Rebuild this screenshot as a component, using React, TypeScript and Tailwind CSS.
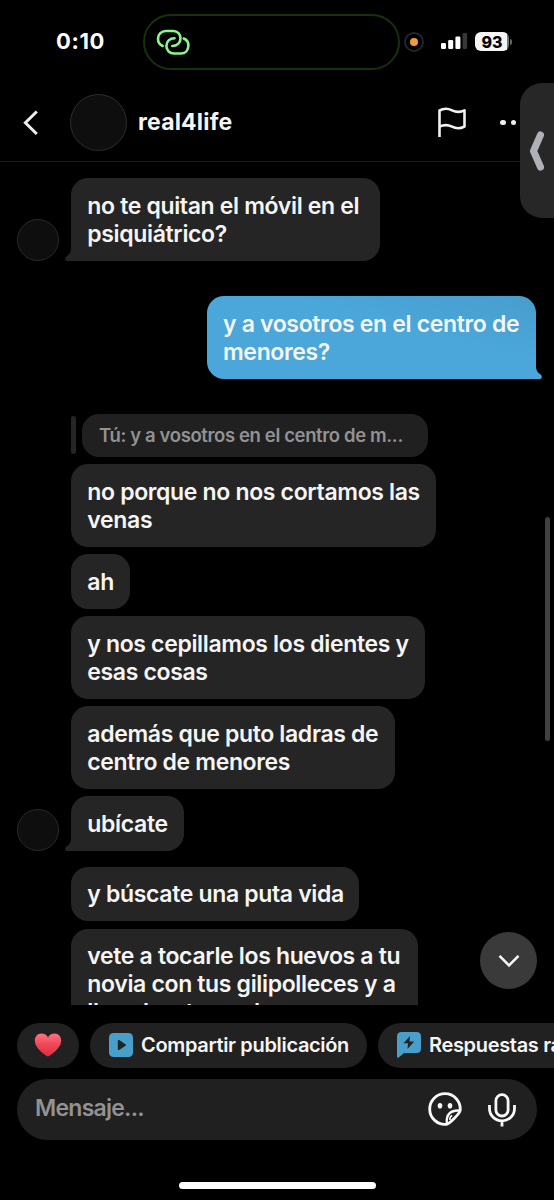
import type { ReactNode } from 'react';

interface BubbleProps {
  lines: string[];
  width: string;
  mine?: boolean;
  tail?: boolean;
  tall?: boolean;
}

function Tail({ mine }: { mine?: boolean }) {
  return (
    <svg
      className={mine ? 'absolute -right-1.5 bottom-0' : 'absolute -left-1.5 bottom-0'}
      width="8"
      height="16"
      viewBox="0 0 8 16"
      fill={mine ? '#4ba6da' : '#252525'}
    >
      <path
        d={
          mine
            ? 'M0 0H2V4Q2 8.500 6.600 11.500Q8.400 13 7.600 15Q7.200 16 5.800 16H0Z'
            : 'M8 0H6V4Q6 8.500 1.400 11.500Q-.4 13 .4 15Q.8 16 2.200 16H8Z'
        }
      />
    </svg>
  );
}

function Bubble({ lines, width, mine, tail, tall }: BubbleProps) {
  return (
    <div
      className={`relative rounded-[17px] px-4 pt-[13.5px] pb-[13px] text-[23px] leading-7 font-semibold tracking-[-0.34px] text-[#f5f5f5] ${width} ${
        mine ? 'rounded-br-none bg-linear-to-bl from-[#489ecd] to-[#4ba6da] to-40%' : 'bg-[#252525]'
      } ${tail && !mine ? 'rounded-bl-none' : ''} ${tall ? 'h-[110px]' : ''}`}
    >
      {lines.map((line) => (
        <p key={line} className="whitespace-nowrap">
          {line}
        </p>
      ))}
      {tail && <Tail mine={mine} />}
    </div>
  );
}

function Avatar() {
  return <div className="size-[42px] shrink-0 rounded-full border border-[#292929] bg-[#0e0e0e]" />;
}

function Incoming({ avatar, children }: { avatar?: boolean; children: ReactNode }) {
  return (
    <div className="flex items-end pl-[17px]">
      <div className="w-[54.3px] shrink-0">{avatar && <Avatar />}</div>
      {children}
    </div>
  );
}

function StatusBar() {
  return (
    <div className="flex h-[84px] shrink-0 items-start pt-[14px]">
      <div className="mt-[13px] ml-[56px] w-[87px] text-[22px] leading-7 font-bold tracking-[0.6px] text-white">0:10</div>
      <div className="flex h-[56px] w-[257px] items-center rounded-full border-2 border-[#18300e] pl-[11px]">
        <svg width="34" height="28" viewBox="0 0 34 28" fill="none" stroke="#8af68c" strokeWidth="2.6" strokeLinecap="round">
          <path d="M6.700 18C3.800 16.700 2 14 2 10.700C2 6.200 5.500 3 9.700 3H17.500C21.500 3 24.500 6.300 24.500 10.300C24.500 14.800 21 18 16.300 18" />
          <path d="M27.700 10.500C30.800 11.700 32.400 14.200 32.400 17.500C32.400 22.200 29.300 25.500 24.800 25.500H18C13.500 25.500 10.400 22.200 10.400 18C10.400 13.300 13.700 10.300 18.500 10.300" />
        </svg>
      </div>
      <div className="mt-[18px] ml-1 flex size-5 items-center justify-center rounded-full border-2 border-[#252529]">
        <div className="size-2 rounded-full bg-[#f59b35]" />
      </div>
      <svg className="mt-[18px] ml-[17px]" width="27" height="18" viewBox="0 0 27 18">
        <rect x="0" y="11" width="5" height="6" rx="1.3" fill="#fff" />
        <rect x="7.2" y="8" width="5" height="9" rx="1.3" fill="#fff" />
        <rect x="14.4" y="4.500" width="5" height="12.500" rx="1.3" fill="#fff" />
        <rect x="21.6" y="1" width="4.500" height="16" rx="1.3" fill="#373737" />
      </svg>
      <div className="mt-[18px] ml-[7px] flex items-center">
        <div className="flex h-[19px] w-[34px] items-center justify-center rounded-[6px] bg-linear-to-r from-[#f5f5f5] from-93% to-[#777] to-93% text-[16px] leading-none font-extrabold text-black">
          93
        </div>
        <div className="ml-px h-[6px] w-[2px] rounded-r-full bg-[#666]" />
      </div>
    </div>
  );
}

function Header() {
  return (
    <div className="flex h-[78px] shrink-0 items-center border-b border-[#1b1b1b]">
      <svg className="ml-[21px]" width="18" height="28" viewBox="0 0 18 28" fill="none" stroke="#eee" strokeWidth="3">
        <path d="M15.800 2.500L4.400 13.800L15.800 25" />
      </svg>
      <div className="ml-[31px] size-[57px] rounded-full border border-[#2d2d2d] bg-[#0e0e0e]" />
      <div className="ml-[11px] w-[297px] text-[23px] font-bold tracking-[0.2px] text-[#f5f5f5]">real4life</div>
      <svg width="32" height="32" viewBox="0 0 32 32" fill="none" stroke="#f1f1f1" strokeWidth="2.6" strokeLinejoin="round">
        <path d="M4.500 30V3.500C9 1 13 1.300 17 3.300S24.500 6 29.500 3.300V19.500C24.500 22.200 21 21.800 17 19.700S9 17.500 4.500 19.500" />
      </svg>
      <div className="ml-[33px] flex gap-[5px]">
        <span className="size-[5.5px] rounded-full bg-[#eee]" />
        <span className="size-[5.5px] rounded-full bg-[#eee]" />
      </div>
    </div>
  );
}

function Actions() {
  return (
    <div className="flex h-[45px] w-[660px] gap-[11px] pl-[17px] text-[20px] font-semibold tracking-[-0.33px] text-[#f5f5f5]">
      <div className="flex w-[62px] items-center justify-center rounded-full bg-[#212121]">
        <svg width="28" height="25" viewBox="0 0 28 25">
          <defs>
            <linearGradient id="heart" x1="0" y1="0" x2="0" y2="1">
              <stop offset="0" stopColor="#ff7280" />
              <stop offset="0.45" stopColor="#f04a5b" />
              <stop offset="1" stopColor="#df2b3c" />
            </linearGradient>
          </defs>
          <path
            fill="url(#heart)"
            d="M14 23.500C12 22.800 .8 15.500 .8 7.500C.8 3.300 3.800 .5 7.400 .5C10.300 .5 12.800 2 14 4.500C15.200 2 17.700 .5 20.600 .5C24.200 .5 27.200 3.300 27.200 7.500C27.200 15.500 16 22.800 14 23.500Z"
          />
        </svg>
      </div>
      <div className="flex w-[277px] items-center rounded-full bg-[#212121] pl-[19px]">
        <svg className="shrink-0" width="24" height="24" viewBox="0 0 24 24">
          <rect width="24" height="24" rx="4.500" fill="#489fc9" />
          <path
            d="M8.800 7.800C8.800 7 9.500 6.700 10.200 7.100L16.500 11.200C17.100 11.600 17.100 12.400 16.500 12.800L10.200 16.900C9.500 17.300 8.800 17 8.800 16.200Z"
            fill="#202426"
          />
        </svg>
        <span className="ml-2 whitespace-nowrap">Compartir publicación</span>
      </div>
      <div className="flex w-[270px] items-center rounded-full bg-[#212121] pl-[19px]">
        <svg className="shrink-0" width="24" height="26" viewBox="0 0 24 26">
          <path d="M4.500 0H19.500Q24 0 24 4.500V16.500Q24 21 19.500 21H7L1.700 25.400Q0 26.500 0 24.500V4.500Q0 0 4.500 0Z" fill="#489fc9" />
          <path d="M13 4L6.500 11.200H11L10.500 17L17.200 9.500H12.600Z" fill="#202426" />
        </svg>
        <span className="ml-2 whitespace-nowrap">Respuestas rápidas</span>
      </div>
    </div>
  );
}

function Composer() {
  return (
    <div className="mx-[17px] mt-[11px] flex h-[61px] items-center rounded-full bg-[#202020]">
      <div className="ml-[18px] w-[393px] pb-0.5 text-[23px] font-semibold tracking-[-0.75px] text-[#929292]">Mensaje...</div>
      <svg width="34" height="34" viewBox="0 0 34 34" fill="none" stroke="#f8f8f8" strokeWidth="2.800" strokeLinejoin="round">
        <path d="M18.500 32.300C9.500 33.200 1.700 26 1.700 17C1.700 8.500 8.500 1.700 17 1.700C26 1.700 33 9.500 32.200 18.500C31.500 21.500 22 31.500 18.500 32.300Z" />
        <path d="M18.900 31.500C17.800 22.500 22.500 17.800 31.800 18.500" strokeWidth="2.400" />
        <path d="M21.800 28C21.800 25.200 22.300 24.300 24.200 23.600" strokeWidth="1.600" />
        <ellipse cx="12" cy="13.800" rx="2.300" ry="2.800" fill="#f8f8f8" stroke="none" />
        <ellipse cx="22" cy="13.800" rx="2.300" ry="2.800" fill="#f8f8f8" stroke="none" />
      </svg>
      <svg className="mt-px ml-[26px]" width="28" height="34" viewBox="0 0 28 34" fill="none" stroke="#f8f8f8" strokeWidth="2.800">
        <rect x="7.900" y="1.700" width="12.200" height="21.300" rx="6.100" />
        <path d="M1.500 12V15.500C1.500 22.500 7 27.800 14 27.800S26.500 22.500 26.500 15.500V12M14 27.800V33.500" />
      </svg>
    </div>
  );
}

export default function App() {
  return (
    <div className="relative flex h-[1200px] w-[554px] flex-col overflow-hidden bg-black font-['Inter',sans-serif]">
      <StatusBar />
      <Header />

      <div className="flex h-[843px] shrink-0 flex-col overflow-hidden pt-4">
        <Incoming avatar>
          <Bubble width="w-[309px]" tail lines={['no te quitan el móvil en el', 'psiquiátrico?']} />
        </Incoming>
        <div className="mt-[35.5px] flex justify-end pr-[18px]">
          <Bubble width="w-[329px]" mine tail lines={['y a vosotros en el centro de', 'menores?']} />
        </div>
        <div className="mt-[35px] flex items-center pl-[71px]">
          <div className="h-[38px] w-[5px] rounded-full bg-[#252525]" />
          <div className="ml-1.5 flex h-[43px] w-[346px] items-center rounded-[17px] bg-[#202020] pt-0.5 pl-[17px] text-[18.5px] font-semibold tracking-[-0.37px] whitespace-nowrap text-[#929292]">
            Tú: y a vosotros en el centro de m...
          </div>
        </div>
        <div className="mt-[7.5px] flex flex-col gap-[7.5px]">
          <Incoming>
            <Bubble width="w-[365px]" lines={['no porque no nos cortamos las', 'venas']} />
          </Incoming>
          <Incoming>
            <Bubble width="w-[59px]" lines={['ah']} />
          </Incoming>
          <Incoming>
            <Bubble width="w-[354px]" lines={['y nos cepillamos los dientes y', 'esas cosas']} />
          </Incoming>
          <Incoming>
            <Bubble width="w-[324px]" lines={['además que puto ladras de', 'centro de menores']} />
          </Incoming>
          <Incoming avatar>
            <Bubble width="w-[113px]" tail lines={['ubícate']} />
          </Incoming>
        </div>
        <div className="mt-4 flex flex-col gap-[7.5px]">
          <Incoming>
            <Bubble width="w-[288px]" lines={['y búscate una puta vida']} />
          </Incoming>
          <Incoming>
            <Bubble width="w-[347px]" tall lines={['vete a tocarle los huevos a tu', 'novia con tus gilipolleces y a', 'llorarle a tu madre']} />
          </Incoming>
        </div>
      </div>

      <div className="mt-[17.5px] shrink-0">
        <Actions />
        <Composer />
      </div>
      <div className="mx-auto mt-[42px] h-[7px] w-[197px] shrink-0 rounded-full bg-white" />

      {/* floating controls over the conversation */}
      <div className="absolute top-[932px] left-[480px] flex size-[57px] items-center justify-center rounded-full bg-[#3a3a3a]">
        <svg width="22" height="14" viewBox="0 0 22 14" fill="none" stroke="#f5f5f5" strokeWidth="2.6">
          <path d="M1.500 1.800L11 11.300L20.500 1.800" />
        </svg>
      </div>
      <div className="absolute top-[83px] left-[520px] flex h-[135px] w-[40px] items-center rounded-l-[22px] bg-[#272727] pl-[9px]">
        <svg width="16" height="40" viewBox="0 0 16 40" fill="none" stroke="#b0b0b7" strokeWidth="7" strokeLinecap="round" strokeLinejoin="round">
          <path d="M11.500 4L4.500 20L11.500 36" />
        </svg>
      </div>
      <div className="absolute top-[517px] left-[545px] h-[224px] w-[5px] rounded-full bg-[#404040]" />
    </div>
  );
}
